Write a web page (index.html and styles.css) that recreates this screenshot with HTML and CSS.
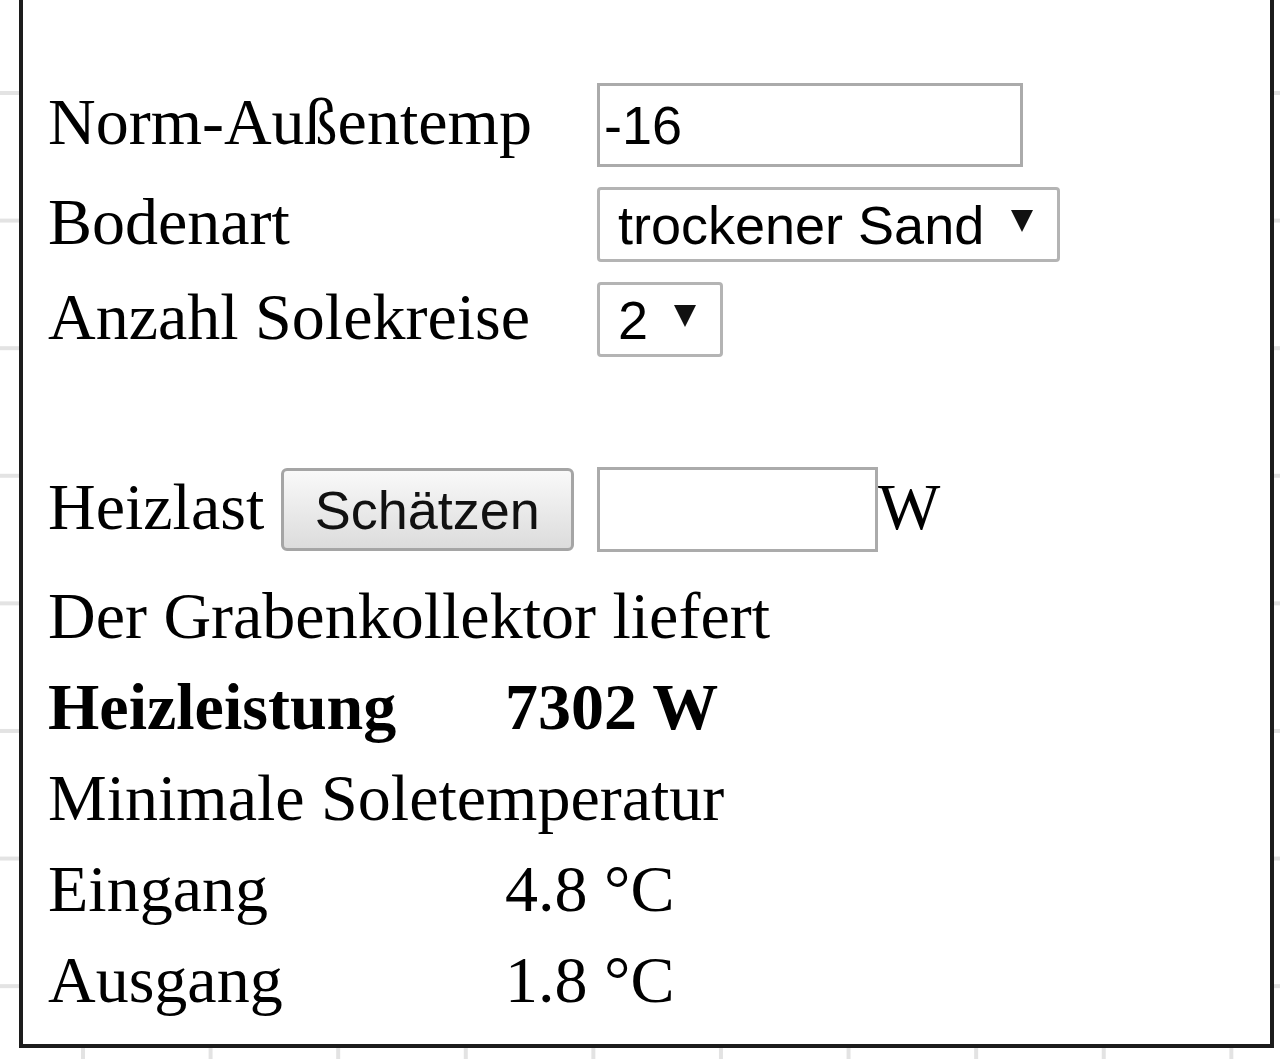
FILE: index.html
```html
<!DOCTYPE html>
<html lang="de">
<head>
  <meta charset="UTF-8" />
  <meta name="viewport" content="width=device-width, initial-scale=1.0"/>
  <title>Grabenkollektor</title>
  <link rel="stylesheet" href="styles.css">
</head>
<body>

  <!-- Popup over the sheet grid -->
  <div class="popup">

    <!-- Input form -->
    <div class="form-grid">
      <label class="label" for="temp">Norm-Außentemp</label>
      <input id="temp" class="field field-temp" type="text" value="-16" />

      <label class="label" for="soil">Bodenart</label>
      <span class="select-wrap"><select id="soil" class="choice choice-soil">
        <option>trockener Sand</option>
        <option>feuchter Sand</option>
        <option>Lehm</option>
        <option>Ton</option>
      </select></span>

      <label class="label" for="circuits">Anzahl Solekreise</label>
      <span class="select-wrap"><select id="circuits" class="choice choice-count">
        <option>1</option>
        <option selected>2</option>
        <option>3</option>
        <option>4</option>
      </select></span>

      <div class="spacer"></div>

      <div class="label">Heizlast <button class="btn" type="button">Schätzen</button></div>
      <div class="label"><input class="field field-load" type="text" />W</div>
    </div>

    <!-- Result -->
    <div class="results">
      <div class="full">Der Grabenkollektor liefert</div>
      <div class="strong">Heizleistung</div>
      <div class="strong">7302 W</div>
      <div class="full">Minimale Soletemperatur</div>
      <div>Eingang</div>
      <div>4.8 °C</div>
      <div>Ausgang</div>
      <div>1.8 °C</div>
    </div>

  </div>

</body>
</html>
```

FILE: styles.css
```css
html, body {
  margin: 0;
  height: 1059px;
  overflow: hidden;
}

body {
  background-color: #fff;
  background-image:
    linear-gradient(#e3e3e3 4px, transparent 4px),
    linear-gradient(90deg, #e3e3e3 4px, transparent 4px);
  background-size: 127.6px 127.6px;
  background-position: 81px 91px;
  font-family: "Liberation Serif", "Times New Roman", serif;
  color: #000;
}

.popup {
  position: absolute;
  top: -10px;
  left: 19px;
  right: 6px;
  bottom: 11px;
  box-sizing: border-box;
  background: #fff;
  border: 4px solid #1c1c1c;
  padding: 89px 0 0 25px;
}

.form-grid {
  display: grid;
  grid-template-columns: 549px auto;
  row-gap: 20px;
  align-items: baseline;
  justify-items: start;
  font-size: 66px;
  line-height: 66px;
}

.spacer {
  grid-column: 1 / -1;
  height: 70px;
}

.field {
  font: 54px "Liberation Sans", Arial, sans-serif;
  color: #000;
  background: #fff;
  border: 3px solid #ababab;
  padding: 0 4px;
  height: 84px;
  box-sizing: border-box;
  outline: none;
  margin: 0;
}

.field-temp {
  width: 426px;
}

.field-load {
  width: 281px;
  height: 85px;
}

.select-wrap {
  position: relative;
  display: inline-block;
}

.select-wrap::after {
  content: "";
  position: absolute;
  right: 27px;
  top: 50%;
  margin-top: -15px;
  border-left: 11px solid transparent;
  border-right: 11px solid transparent;
  border-top: 22px solid #111;
  pointer-events: none;
}

.choice {
  -webkit-appearance: none;
  appearance: none;
  font: 54px "Liberation Sans", Arial, sans-serif;
  color: #000;
  background: #fff;
  border: 3px solid #b4b4b4;
  border-radius: 4px;
  height: 75px;
  padding: 0 72px 0 18px;
  box-sizing: border-box;
  margin: 0;
}

.choice-soil {
  width: 463px;
}

.choice-count {
  width: 126px;
}

.btn {
  font: 54px "Liberation Sans", Arial, sans-serif;
  color: #111;
  width: 293px;
  height: 83px;
  padding: 0;
  margin: 0;
  border: 3px solid #a5a5a5;
  border-radius: 6px;
  background: linear-gradient(#f9f9f9, #dcdcdc);
  box-sizing: border-box;
}

.results {
  display: grid;
  grid-template-columns: 457px auto;
  font-size: 66px;
  line-height: 91px;
  margin-top: 18px;
}

.full {
  grid-column: 1 / -1;
}

.strong {
  font-weight: bold;
}
```
